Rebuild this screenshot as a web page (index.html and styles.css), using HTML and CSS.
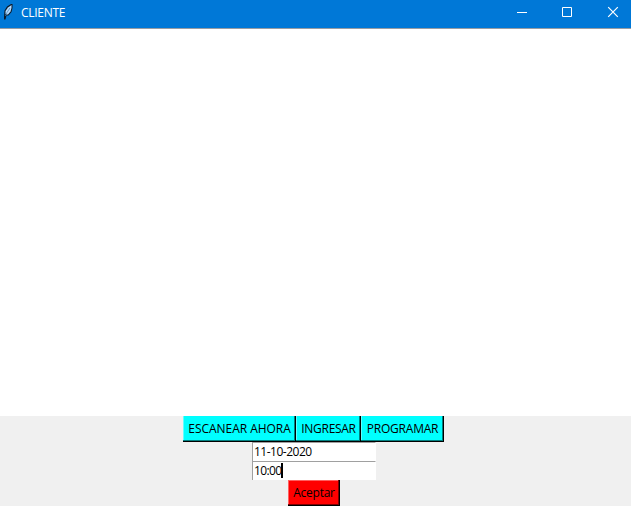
FILE: index.html
```html
<!DOCTYPE html>
<html lang="es">
<head>
<meta charset="utf-8">
<title>CLIENTE</title>
<link rel="stylesheet" href="styles.css">
</head>
<body>
<div class="window">
  <header class="titlebar">
    <svg class="feather" width="12" height="18" viewBox="0 0 12 18">
      <path d="M1 16.500V14L1.500 7.500 4 3.500 8 1h1.500v4L8.500 9 5.500 12.500H3.500L2.500 16.500z" fill="#0b1a2b"/>
      <path d="M2.500 11V8L5 4.500 8.500 2v3L7.500 8.500 5 11.500H3.500z" fill="#b5dcff"/>
      <path d="M2.500 13L4 9.500 7 5" fill="none" stroke="#4a86bd" stroke-width=".8"/>
    </svg>
    <span class="title">CLIENTE</span>
    <div class="controls">
      <svg width="46" height="28" viewBox="0 0 46 28"><path d="M9 12.500h10" stroke="#fff" fill="none"/></svg>
      <svg width="46" height="28" viewBox="0 0 46 28"><path d="M8.500 7.500h9v9h-9z" stroke="#fff" fill="none"/></svg>
      <svg width="31" height="28" viewBox="0 0 31 28"><path d="M8.200 7.200l9.600 9.600M17.800 7.200l-9.600 9.600" stroke="#fff" stroke-width="1.200" fill="none"/></svg>
    </div>
  </header>
  <main class="canvas"></main>
  <footer class="panel">
    <div class="actions">
      <button class="btn scan"><span>ESCANEAR AHORA</span></button>
      <button class="btn enter"><span>INGRESAR</span></button>
      <button class="btn schedule"><span>PROGRAMAR</span></button>
    </div>
    <div class="entry date"><span>11-10-2020</span></div>
    <div class="entry time"><span>10:00</span><i class="caret"></i></div>
    <button class="btn accept"><span>Aceptar</span></button>
  </footer>
</div>
</body>
</html>
```
FILE: styles.css
```css
* { box-sizing: border-box; }
body {
  margin: 0;
  overflow: hidden;
  font: 12px/16px "Open Sans", "Noto Sans", sans-serif;
  color: #000;
}
.window {
  display: flex;
  flex-direction: column;
  width: 631px;
  height: 506px;
  background: #fff;
}
.titlebar {
  display: flex;
  height: 29px;
  padding-left: 3px;
  background: #0078d7;
  border-bottom: 1px solid #979ca3;
  color: #fff;
}
.feather { margin-top: 3px; }
.title {
  margin: 5px 0 0 6px;
  letter-spacing: -0.3px;
}
.controls { display: flex; margin-left: auto; }
.canvas { flex: 1; }
.panel {
  display: flex;
  flex-direction: column;
  align-items: center;
  height: 90px;
  padding-right: 3px;
  background: #f0f0f0;
}
.actions { display: flex; padding-right: 1px; }
.btn {
  display: flex;
  justify-content: center;
  height: 26px;
  padding: 5px 0 0;
  border: 0;
  background: #0ff;
  box-shadow: inset -1px -1px #000, inset -2px -2px #008080, inset 1px 0 #60ffff;
  font: inherit;
  color: #000;
  white-space: nowrap;
}
.scan { width: 113px; letter-spacing: -0.04px; }
.enter { width: 65px; letter-spacing: -0.3px; }
.schedule { width: 83px; letter-spacing: -0.2px; }
.accept {
  width: 52px;
  letter-spacing: -0.25px;
  background: #f00;
  box-shadow: inset -1px -1px #000, inset -2px -2px #800000, inset 1px 1px #ff6060;
}
.entry {
  display: flex;
  width: 124px;
  height: 19px;
  padding: 1px 0 0 1px;
  background: #fff;
  border-top: 1px solid #a0a0a0;
  border-left: 1px solid #a0a0a0;
  border-right: 1px solid #fff;
  letter-spacing: -0.5px;
}
.time { letter-spacing: -0.6px; }
.caret { width: 2px; height: 15px; margin: 0 0 0 -1px; background: #000; }
```
